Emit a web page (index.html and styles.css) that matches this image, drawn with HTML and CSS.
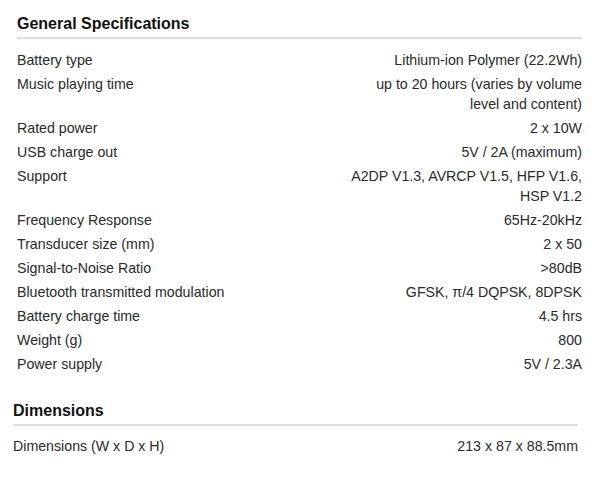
FILE: index.html
```html
<!DOCTYPE html>
<html>
<head>
<meta charset="utf-8">
<link rel="stylesheet" href="styles.css">
</head>
<body>
<section class="spec spec-general">
  <h2 class="spec-title">General Specifications</h2>
  <div class="spec-list">
    <div class="spec-row"><div class="spec-label">Battery type</div><div class="spec-value">Lithium-ion Polymer (22.2Wh)</div></div>
    <div class="spec-row"><div class="spec-label">Music playing time</div><div class="spec-value">up to 20 hours (varies by volume level and content)</div></div>
    <div class="spec-row"><div class="spec-label">Rated power</div><div class="spec-value">2 x 10W</div></div>
    <div class="spec-row"><div class="spec-label">USB charge out</div><div class="spec-value">5V / 2A (maximum)</div></div>
    <div class="spec-row"><div class="spec-label">Support</div><div class="spec-value">A2DP V1.3, AVRCP V1.5, HFP V1.6, HSP V1.2</div></div>
    <div class="spec-row"><div class="spec-label">Frequency Response</div><div class="spec-value">65Hz-20kHz</div></div>
    <div class="spec-row"><div class="spec-label">Transducer size (mm)</div><div class="spec-value">2 x 50</div></div>
    <div class="spec-row"><div class="spec-label">Signal-to-Noise Ratio</div><div class="spec-value">&gt;80dB</div></div>
    <div class="spec-row"><div class="spec-label">Bluetooth transmitted modulation</div><div class="spec-value">GFSK, π/4 DQPSK, 8DPSK</div></div>
    <div class="spec-row"><div class="spec-label">Battery charge time</div><div class="spec-value">4.5 hrs</div></div>
    <div class="spec-row"><div class="spec-label">Weight (g)</div><div class="spec-value">800</div></div>
    <div class="spec-row"><div class="spec-label">Power supply</div><div class="spec-value">5V / 2.3A</div></div>
  </div>
</section>
<section class="spec spec-dims">
  <h2 class="spec-title">Dimensions</h2>
  <div class="spec-list">
    <div class="spec-row"><div class="spec-label">Dimensions (W x D x H)</div><div class="spec-value">213 x 87 x 88.5mm</div></div>
  </div>
</section>
</body>
</html>
```
FILE: styles.css
```css
html, body {
  margin: 0;
  padding: 0;
  background: #fff;
}
body {
  font-family: "Liberation Sans", Arial, sans-serif;
  color: #2a2a2a;
}
.spec {
  width: 565px;
}
.spec-general {
  margin: 14px 0 0 17px;
}
.spec-dims {
  margin: 25px 0 0 13px;
}
.spec-title {
  margin: 0;
  font-size: 16px;
  line-height: 20px;
  font-weight: bold;
  color: #111;
  padding-bottom: 3px;
  border-bottom: 2px solid #ddd;
}
.spec-list {
  margin-top: 9px;
}
.spec-dims .spec-list {
  margin-top: 8px;
}
.spec-row {
  display: grid;
  grid-template-columns: 1fr 232px;
  padding: 2px 0;
  font-size: 14.2px;
  line-height: 20px;
}
.spec-value {
  text-align: right;
}
```
